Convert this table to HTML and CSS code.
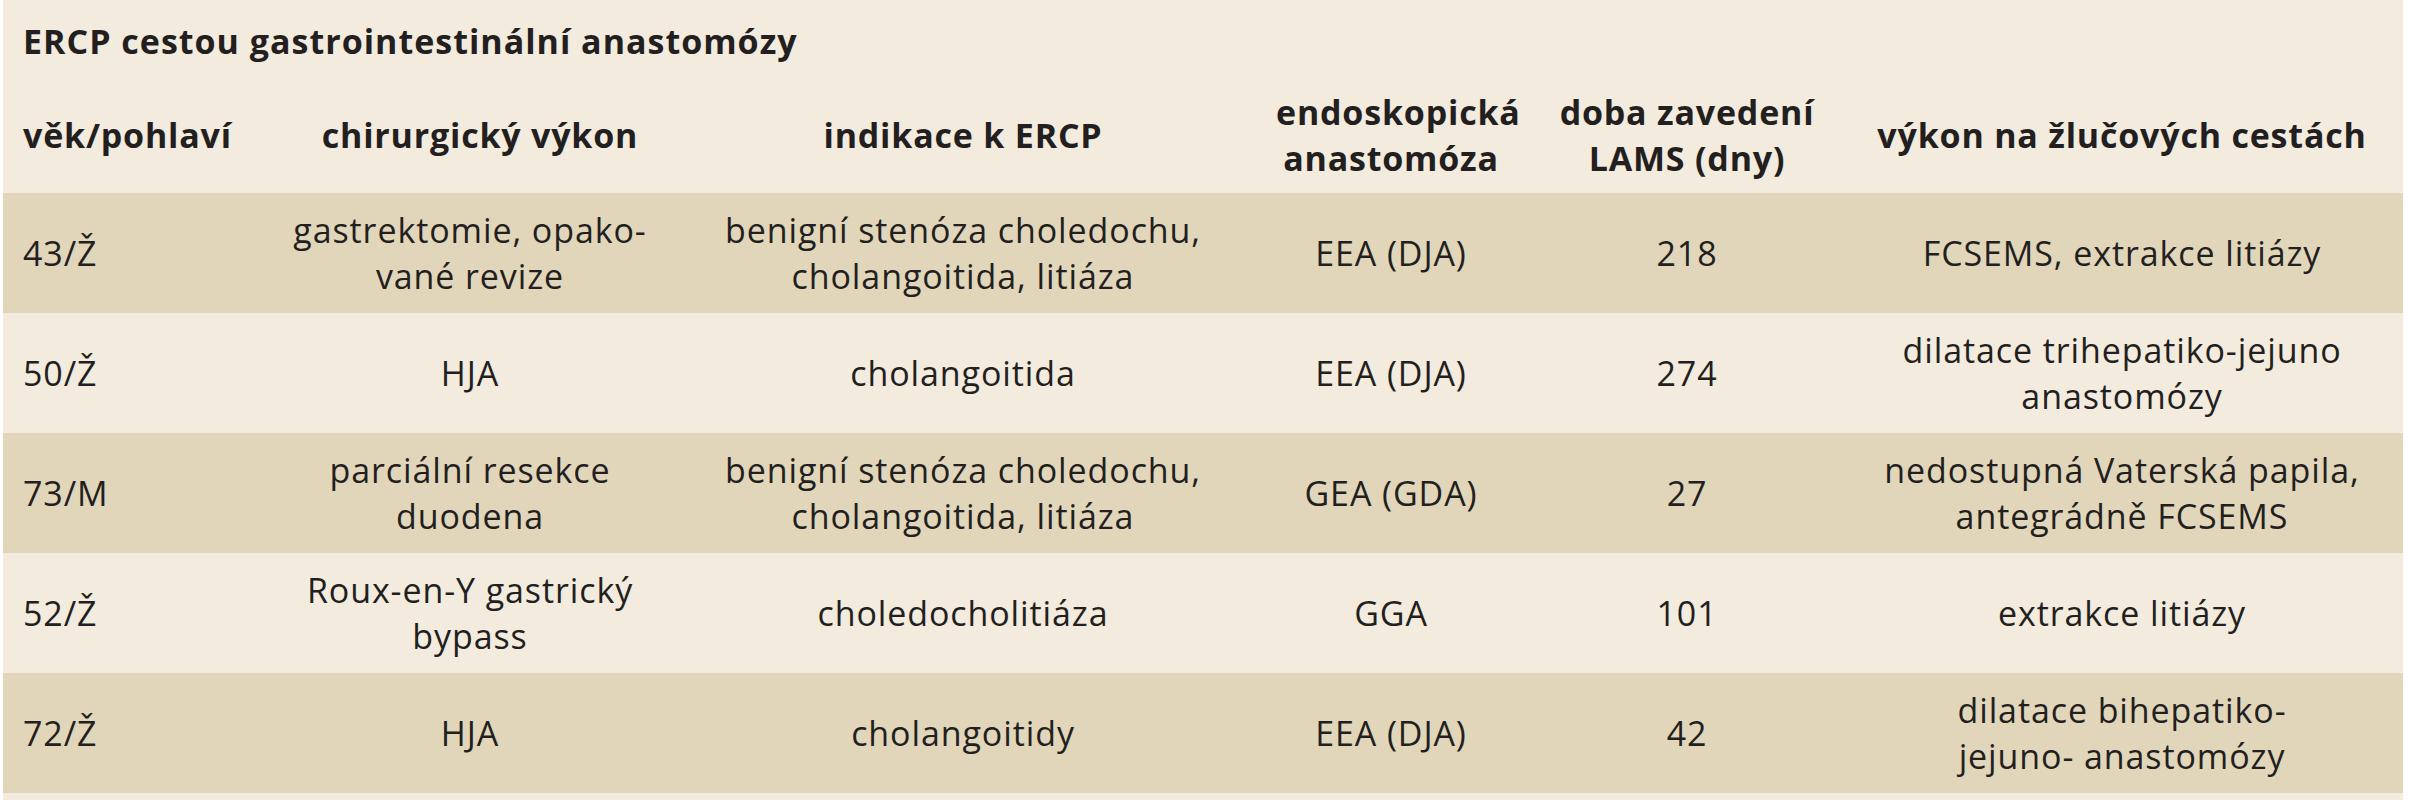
FILE: index.html
```html
<!DOCTYPE html>
<html lang="cs">
<head>
<meta charset="utf-8">
<title>ERCP cestou gastrointestinální anastomózy</title>
<link rel="stylesheet" href="styles.css">
</head>
<body>
<div class="table">
  <div class="title">ERCP cestou gastrointestinální anastomózy</div>
  <div class="row head">
    <div class="c c1">věk/pohlaví</div>
    <div class="c c2h">chirurgický výkon</div>
    <div class="c">indikace k ERCP</div>
    <div class="c">endoskopická<br>anastomóza</div>
    <div class="c">doba zavedení<br>LAMS (dny)</div>
    <div class="c">výkon na žlučových cestách</div>
  </div>
  <div class="row alt">
    <div class="c c1">43/Ž</div>
    <div class="c">gastrektomie, opako-<br>vané revize</div>
    <div class="c">benigní stenóza choledochu,<br>cholangoitida, litiáza</div>
    <div class="c">EEA (DJA)</div>
    <div class="c">218</div>
    <div class="c">FCSEMS, extrakce litiázy</div>
  </div>
  <div class="row">
    <div class="c c1">50/Ž</div>
    <div class="c">HJA</div>
    <div class="c">cholangoitida</div>
    <div class="c">EEA (DJA)</div>
    <div class="c">274</div>
    <div class="c">dilatace trihepatiko-jejuno<br>anastomózy</div>
  </div>
  <div class="row alt">
    <div class="c c1">73/M</div>
    <div class="c">parciální resekce<br>duodena</div>
    <div class="c">benigní stenóza choledochu,<br>cholangoitida, litiáza</div>
    <div class="c">GEA (GDA)</div>
    <div class="c">27</div>
    <div class="c">nedostupná Vaterská papila,<br>antegrádně FCSEMS</div>
  </div>
  <div class="row">
    <div class="c c1">52/Ž</div>
    <div class="c">Roux-en-Y gastrický<br>bypass</div>
    <div class="c">choledocholitiáza</div>
    <div class="c">GGA</div>
    <div class="c">101</div>
    <div class="c">extrakce litiázy</div>
  </div>
  <div class="row alt">
    <div class="c c1">72/Ž</div>
    <div class="c">HJA</div>
    <div class="c">cholangoitidy</div>
    <div class="c">EEA (DJA)</div>
    <div class="c">42</div>
    <div class="c">dilatace bihepatiko-<br>jejuno- anastomózy</div>
  </div>
</div>
</body>
</html>
```
FILE: styles.css
```css
html, body {
  margin: 0;
  padding: 0;
  background: #ffffff;
}
body {
  font-family: "Open Sans", "Liberation Sans", sans-serif;
  color: #231f20;
}
.table {
  margin-left: 3px;
  width: 2400px;
  height: 800px;
  background: #f2ebde;
}
.title {
  height: 77px;
  box-sizing: border-box;
  padding: 20px 0 0 20px;
  font-size: 34px;
  font-weight: 700;
  letter-spacing: 1px;
  line-height: 42px;
  white-space: nowrap;
}
.row {
  display: grid;
  grid-template-columns: 287px 360px 626px 230px 362px 508px;
  padding-right: 27px;
  height: 120px;
  align-items: center;
  font-size: 34px;
  letter-spacing: 0.9px;
  line-height: 46px;
}
.row.head {
  height: 116px;
  font-weight: 700;
  font-size: 34px;
  letter-spacing: 0.8px;
}
.row.alt {
  background: #e1d6ba;
}
.c {
  text-align: center;
  white-space: nowrap;
}
.c.c1 {
  text-align: left;
  padding-left: 20px;
}
.c.c2h {
  padding-left: 20px;
}
```
